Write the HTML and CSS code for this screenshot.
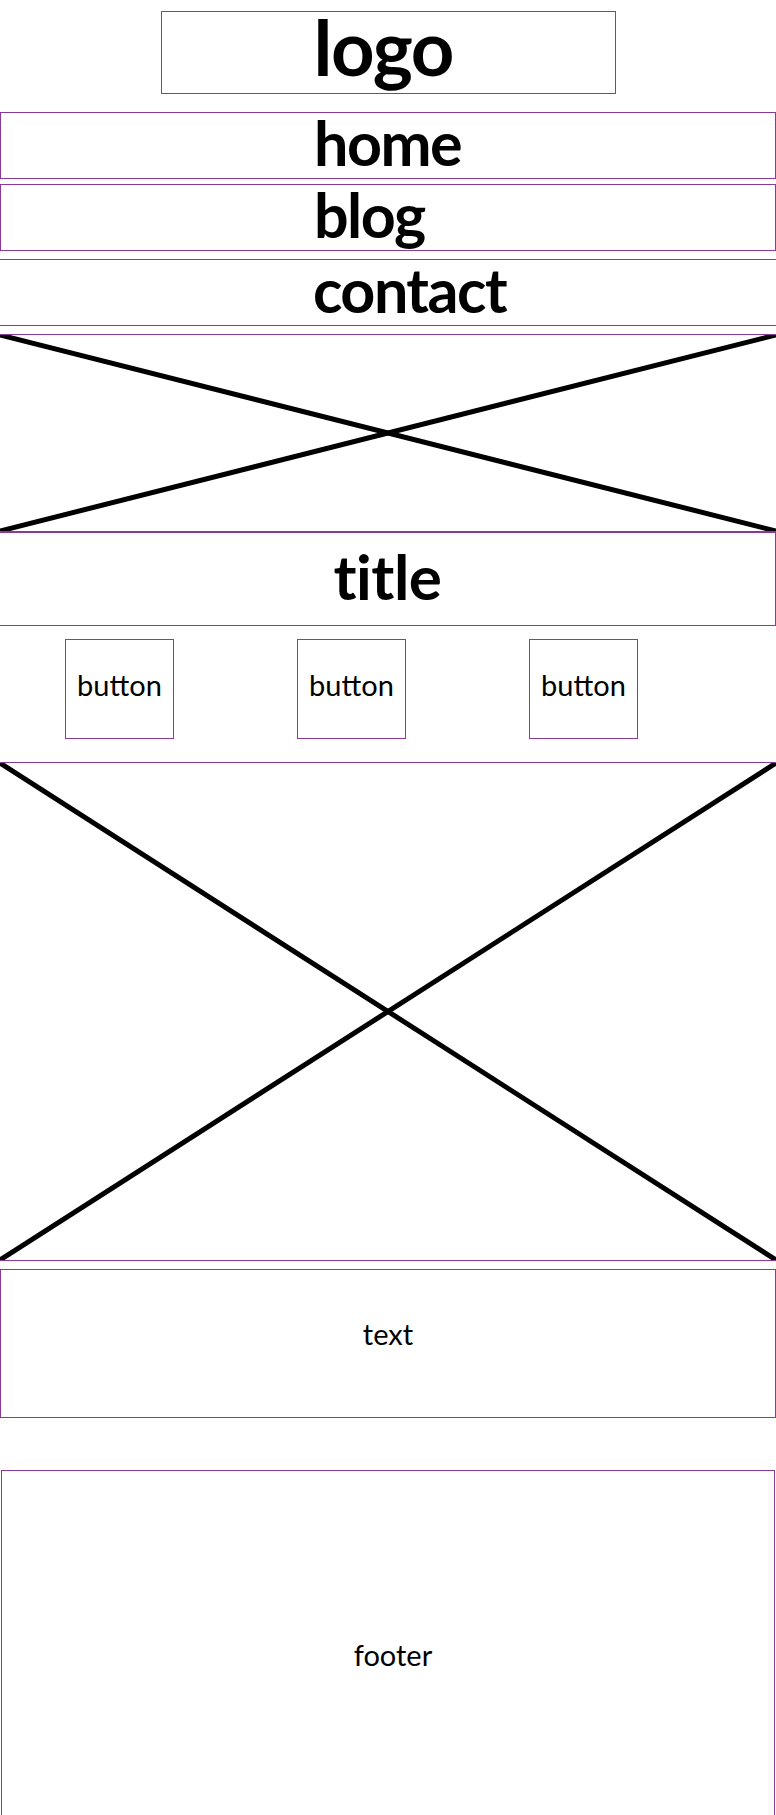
FILE: index.html
```html
<!DOCTYPE html>
<html lang="en">
<head>
  <meta charset="UTF-8">
  <meta name="viewport" content="width=device-width, initial-scale=1.0">
  <title>Wireframe</title>
  <link rel="stylesheet" href="styles.css">
</head>
<body>
  <header>
    <div class="logo">logo</div>
    <ul class="nav">
      <li class="nav-item boxed home">home</li>
      <li class="nav-item boxed blog">blog</li>
      <li class="nav-item contact">contact</li>
    </ul>
  </header>

  <div class="hero placeholder">
    <svg viewBox="0 0 100 100" preserveAspectRatio="none">
      <line x1="0" y1="0" x2="100" y2="100" />
      <line x1="0" y1="100" x2="100" y2="0" />
    </svg>
  </div>

  <div class="title">title</div>

  <div class="buttons">
    <div class="button">button</div>
    <div class="button">button</div>
    <div class="button">button</div>
  </div>

  <div class="picture placeholder">
    <svg viewBox="0 0 100 100" preserveAspectRatio="none">
      <line x1="0" y1="0" x2="100" y2="100" />
      <line x1="0" y1="100" x2="100" y2="0" />
    </svg>
  </div>

  <div class="text">text</div>

  <footer>footer</footer>
</body>
</html>
```

FILE: styles.css
```css
    * {
      box-sizing: border-box;
    }
    body {
      margin: 0;
      background: white;
      color: black;
      font-family: Lato, "Open Sans", sans-serif;
      --purple: #8b3a9b;
    }
    header {
      padding-top: 11px;
    }
    .logo {
      width: 455px;
      height: 83px;
      margin: 0 auto;
      border: 1.5px solid var(--purple);
      font-size: 76px;
      font-weight: 700;
      line-height: 70px;
      padding-left: 152px;
      letter-spacing: -1.5px;
    }
    .nav {
      list-style-type: none;
      margin: 18px 0 0;
      padding: 0;
    }
    .nav-item {
      height: 67px;
      padding-left: 313px;
      font-size: 61px;
      font-weight: 700;
      line-height: 60px;
      letter-spacing: -1.5px;
      border-top: 1px solid var(--purple);
      border-bottom: 1px solid var(--purple);
    }
    .nav-item.boxed {
      border: 1px solid var(--purple);
    }
    .nav .blog {
      margin-top: 5px;
    }
    .nav .contact {
      margin-top: 8px;
    }

    .placeholder svg {
      display: block;
      width: 100%;
      height: 100%;
    }
    .placeholder line {
      stroke: black;
      stroke-width: 5;
      vector-effect: non-scaling-stroke;
    }
    .hero {
      margin-top: 8px;
      height: 199px;
      border-top: 1px solid var(--purple);
      border-bottom: 2px solid var(--purple);
    }
    .title {
      height: 93px;
      border-right: 1px solid var(--purple);
      border-bottom: 1px solid var(--purple);
      text-align: center;
      font-size: 62px;
      font-weight: 700;
      line-height: 86px;
      letter-spacing: -0.5px;
    }

    .buttons {
      display: flex;
      gap: 123px;
      padding-left: 65px;
      margin-top: 13px;
    }
    .button {
      width: 109px;
      height: 100px;
      border: 1px solid var(--purple);
      display: flex;
      align-items: center;
      justify-content: center;
      padding-bottom: 10px;
      font-size: 29px;
    }

    .picture {
      margin-top: 23px;
      height: 499px;
      border-top: 1px solid var(--purple);
      border-bottom: 1px solid var(--purple);
    }
    .text {
      margin-top: 8px;
      height: 149px;
      border: 1px solid var(--purple);
      display: flex;
      align-items: center;
      justify-content: center;
      padding-bottom: 20px;
      font-size: 29px;
    }
    footer {
      margin: 52px 1px 0;
      height: 368px;
      border: 1px solid var(--purple);
      display: flex;
      align-items: center;
      justify-content: center;
      padding-left: 10px;
      font-size: 29px;
    }
```
